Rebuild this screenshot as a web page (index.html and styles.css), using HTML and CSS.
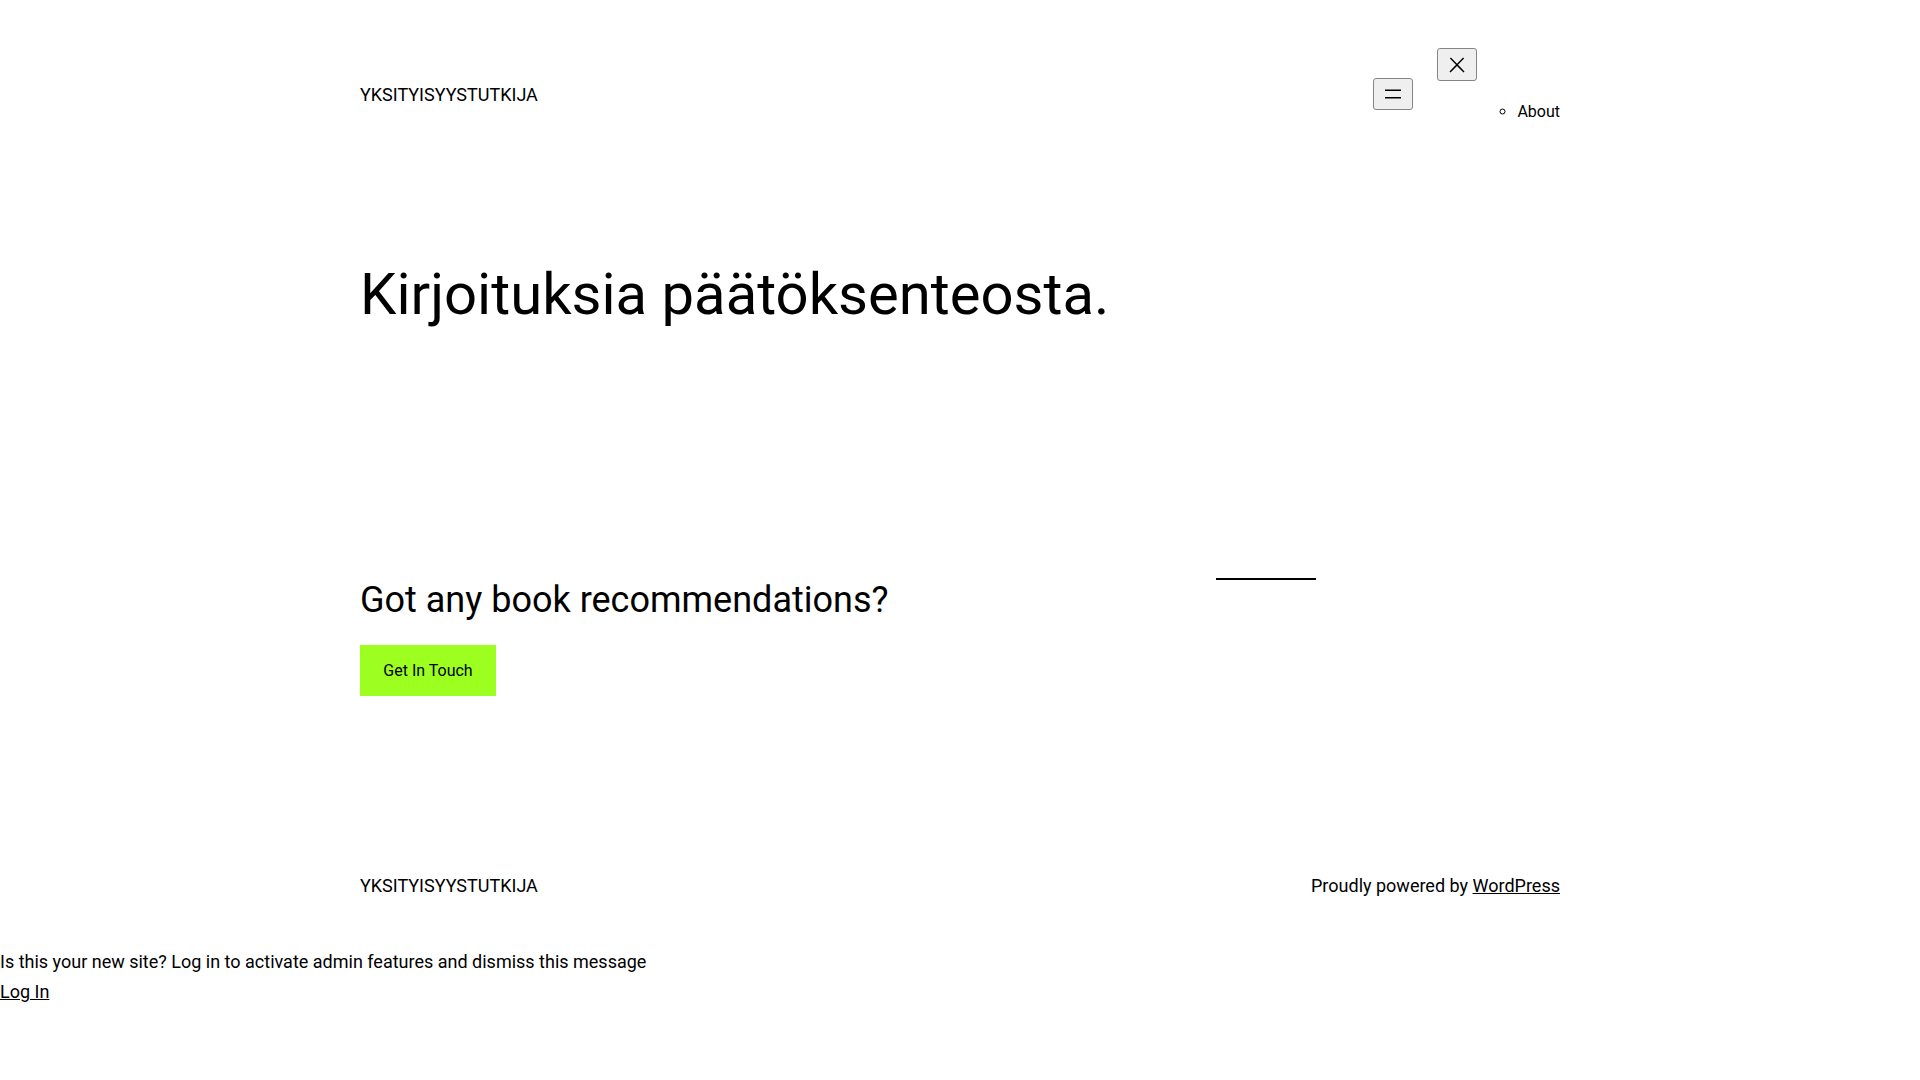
FILE: index.html
```html
<!DOCTYPE html>
<html lang="fi">
<head>
<meta charset="utf-8">
<title>YKSITYISYYSTUTKIJA</title>
<link rel="stylesheet" href="styles.css">
</head>
<body>
<div class="site">
  <header class="site-header">
    <p class="site-title"><a href="#">YKSITYISYYSTUTKIJA</a></p>
    <nav class="site-nav" aria-label="Navigation">
      <button class="nav-btn nav-btn--open" type="button" aria-label="Open menu">
        <svg width="24" height="24" viewBox="0 0 24 24" aria-hidden="true"><rect x="4" y="7.5" width="16" height="1.5"></rect><rect x="4" y="15" width="16" height="1.5"></rect></svg>
      </button>
      <div class="nav-panel">
        <button class="nav-btn" type="button" aria-label="Close menu">
          <svg width="24" height="24" viewBox="0 0 24 24" aria-hidden="true"><path d="M13 11.8l6.1-6.3-1-1-6.1 6.2-6.1-6.2-1 1 6.1 6.3-6.5 6.7 1 1 6.5-6.6 6.5 6.6 1-1z"></path></svg>
        </button>
        <ul class="nav-list">
          <li><a href="#">About</a></li>
        </ul>
      </div>
    </nav>
  </header>

  <main class="site-main">
    <h1 class="page-heading">Kirjoituksia päätöksenteosta.</h1>

    <section class="cta">
      <div class="cta-col">
        <h2 class="cta-heading">Got any book recommendations?</h2>
        <div class="cta-buttons"><a class="btn" href="#">Get In Touch</a></div>
      </div>
      <div class="cta-col">
        <hr class="separator">
      </div>
    </section>
  </main>

  <footer class="site-footer">
    <p class="site-title"><a href="#">YKSITYISYYSTUTKIJA</a></p>
    <p class="credit">Proudly powered by <a href="#">WordPress</a></p>
  </footer>
</div>

<div class="admin-notice">
  <p class="admin-notice-text">Is this your new site? Log in to activate admin features and dismiss this message</p>
  <a class="admin-notice-link" href="#">Log In</a>
</div>
</body>
</html>
```

FILE: styles.css
```css
html, body {
  margin: 0;
  padding: 0;
  background: #ffffff;
}

body {
  font-family: Roboto, "Liberation Sans", Arial, sans-serif;
  font-size: 18px;
  line-height: 1.6;
  color: #000000;
}

a {
  color: #000000;
}

p {
  margin: 0;
}

.site {
  width: 1200px;
  margin: 0 auto;
}

/* Header */
.site-header {
  display: flex;
  justify-content: space-between;
  align-items: center;
  padding-top: 48px;
}

.site-title {
  font-size: 18px;
  line-height: 28.8px;
  text-transform: uppercase;
  font-weight: 400;
}

.site-title a {
  text-decoration: none;
}

.site-nav {
  display: flex;
  align-items: center;
  gap: 24px;
  font-size: 16px;
}

.nav-btn {
  box-sizing: border-box;
  width: 40px;
  height: 33px;
  padding: 0;
  display: flex;
  align-items: center;
  justify-content: center;
  background: #efefef;
  border: 1px solid #858585;
  border-radius: 3px;
  color: #000;
}

.nav-btn--open {
  height: 32px;
  margin-bottom: 3px;
}

.nav-btn svg {
  display: block;
  fill: #000;
}

.nav-panel {
  width: 123px;
  display: flex;
  flex-direction: column;
  align-items: flex-start;
}

.nav-list {
  align-self: stretch;
  display: flex;
  justify-content: flex-end;
  margin: 18px 0;
  padding-left: 40px;
  list-style: circle;
  line-height: 25.6px;
}

.nav-list li {
  display: list-item;
}

.nav-list a {
  text-decoration: none;
}

/* Main */
.page-heading {
  margin: 117.4px 0 0;
  font-size: 58px;
  line-height: 69px;
  font-weight: 400;
}

.cta {
  display: flex;
  align-items: flex-start;
  gap: 24px;
  margin-top: 250px;
}

.cta-col {
  flex: 1 1 0;
}

.cta-heading {
  margin: 0;
  font-size: 36px;
  line-height: 1.2;
  font-weight: 400;
}

.cta-buttons {
  display: flex;
  margin-top: 23px;
}

.btn {
  display: inline-block;
  background: #9dff20;
  color: #000;
  font-size: 16px;
  line-height: 25.6px;
  padding: calc(0.667em + 2px) calc(1.333em + 2px);
  text-decoration: none;
}

.separator {
  width: 100px;
  height: 0;
  margin: -1px auto 0;
  border: none;
  border-top: 2px solid #000;
}

/* Footer */
.site-footer {
  display: flex;
  justify-content: space-between;
  align-items: center;
  margin-top: 175.5px;
}

.credit {
  font-size: 18px;
  line-height: 28.8px;
}

/* Admin notice */
.admin-notice {
  margin-top: 47.5px;
  font-size: 18px;
  line-height: 28.8px;
}

.admin-notice-link {
  display: inline-block;
  margin-top: 1px;
}
```
